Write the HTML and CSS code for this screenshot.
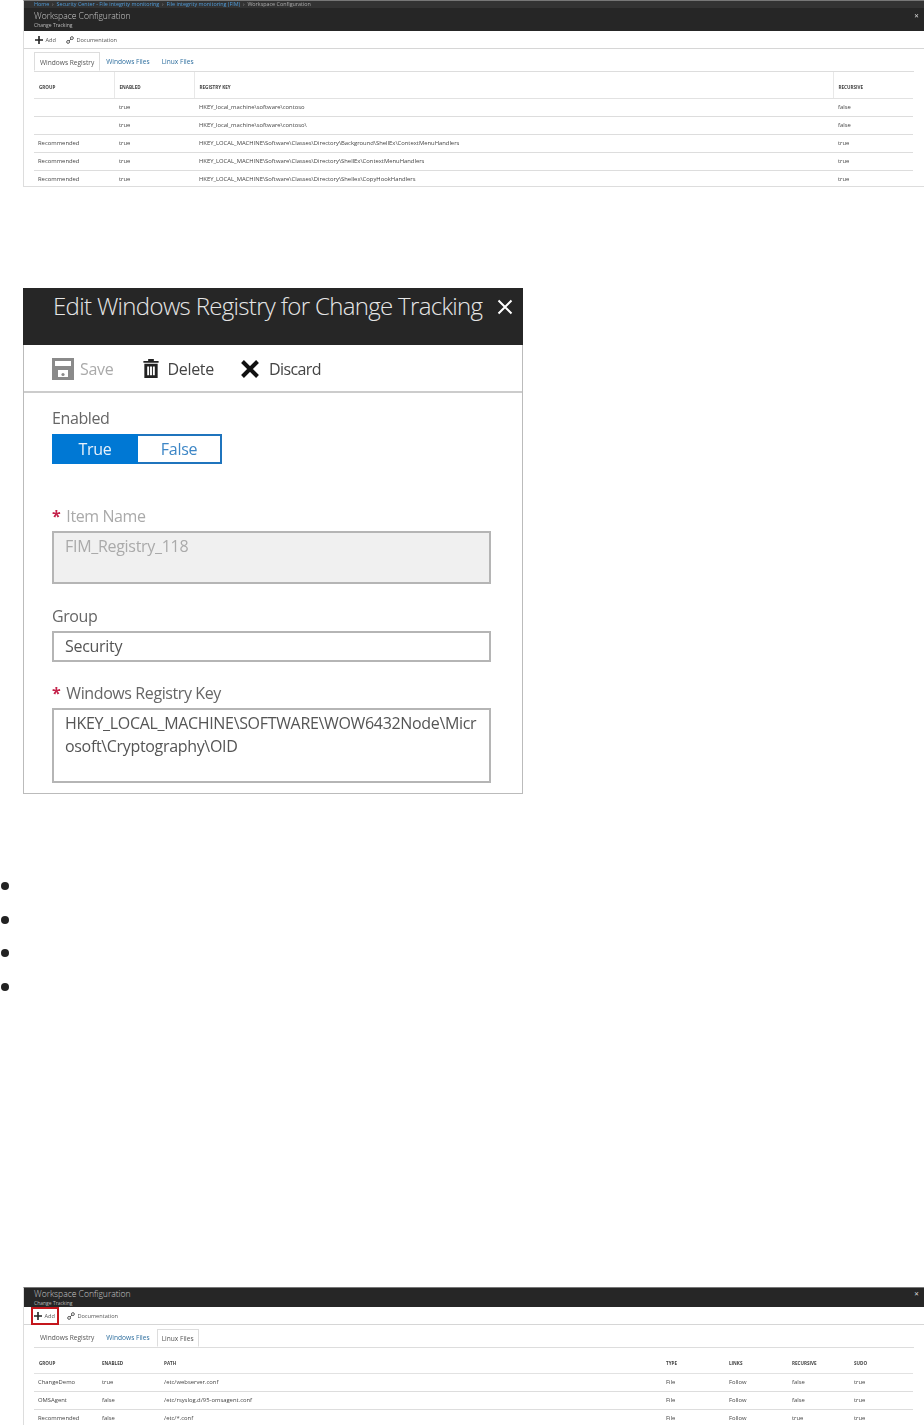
FILE: index.html
```html
<!DOCTYPE html>
<html lang="en">
<head>
<meta charset="utf-8">
<title>Workspace Configuration</title>
<link rel="stylesheet" href="styles.css">
</head>
<body>
<svg class="defs" width="0" height="0" aria-hidden="true">
  <symbol id="plus" viewBox="0 0 10 10"><path d="M4 0h2v4h4v2H6v4H4V6H0V4h4z"/></symbol>
  <symbol id="link" viewBox="0 0 10 10"><g fill="none" stroke="#333" stroke-width="1"><circle cx="2.6" cy="7.4" r="1.8"/><circle cx="7.4" cy="2.6" r="1.8"/><path d="M3.8 6.2l2.4-2.4"/></g></symbol>
</svg>

<section class="shot shot-one">
  <div class="crumbs"><span>Home</span> &nbsp;›&nbsp; <span>Security Center - File integrity monitoring</span> &nbsp;›&nbsp; <span>File integrity monitoring (FIM)</span> &nbsp;›&nbsp; <em>Workspace Configuration</em></div>
  <header class="blade-head">
    <div>
      <h2 class="blade-title">Workspace Configuration</h2>
      <p class="blade-sub">Change Tracking</p>
    </div>
    <span class="blade-close">✕</span>
  </header>
  <div class="blade-tools">
    <span class="tool tool-add"><svg class="ico"><use href="#plus"/></svg>Add</span>
    <span class="tool"><svg class="ico"><use href="#link"/></svg>Documentation</span>
  </div>
  <div class="blade-body">
    <div class="tabs">
      <span class="tab tab-on">Windows Registry</span>
      <span class="tab tab-link">Windows Files</span>
      <span class="tab tab-link">Linux Files</span>
    </div>
    <table class="grid reg-grid">
      <thead><tr><th>GROUP</th><th>ENABLED</th><th>REGISTRY KEY</th><th>RECURSIVE</th></tr></thead>
      <tbody>
        <tr><td></td><td>true</td><td>HKEY_local_machine\software\contoso</td><td>false</td></tr>
        <tr><td></td><td>true</td><td>HKEY_local_machine\software\contoso\</td><td>false</td></tr>
        <tr><td>Recommended</td><td>true</td><td>HKEY_LOCAL_MACHINE\Software\Classes\Directory\Background\ShellEx\ContextMenuHandlers</td><td>true</td></tr>
        <tr><td>Recommended</td><td>true</td><td>HKEY_LOCAL_MACHINE\Software\Classes\Directory\ShellEx\ContextMenuHandlers</td><td>true</td></tr>
        <tr><td>Recommended</td><td>true</td><td>HKEY_LOCAL_MACHINE\Software\Classes\Directory\Shellex\CopyHookHandlers</td><td>true</td></tr>
      </tbody>
    </table>
  </div>
</section>

<section class="panel">
  <header class="panel-head">
    <h1 class="panel-title">Edit Windows Registry for Change Tracking</h1>
    <svg class="panel-close" viewBox="0 0 16 16"><path d="M1.500 1.500l13 13M14.500 1.500l-13 13" stroke="#fff" stroke-width="2" fill="none"/></svg>
  </header>
  <div class="panel-tools">
    <span class="ptool ptool-off">
      <svg class="pico pico-save" viewBox="0 0 22 22"><path fill="#8a8a8a" d="M0 0h22v22H0z"/><path fill="#fff" d="M3 3h16v5H3zM6 12h10v7H6z"/><circle cx="11" cy="16.500" r="1.600" fill="#8a8a8a"/></svg>
      Save
    </span>
    <span class="ptool ptool-del">
      <svg class="pico pico-del" viewBox="0 0 16 20"><path fill="#222" fill-rule="evenodd" d="M5 0h6v2h5v2H0V2h5zM1 5h14v15H1zM4 8v9h2V8zM7 8v9h2V8zM10 8v9h2V8z"/></svg>
      Delete
    </span>
    <span class="ptool ptool-discard">
      <svg class="pico pico-x" viewBox="0 0 20 20"><path d="M2.500 2.500l15 15M17.500 2.500l-15 15" stroke="#111" stroke-width="4" fill="none"/></svg>
      Discard
    </span>
  </div>
  <div class="panel-body">
    <div class="label">Enabled</div>
    <div class="toggle"><span class="toggle-on">True</span><span class="toggle-off">False</span></div>
    <div class="label label-item"><span class="req">*</span><span class="muted">Item Name</span></div>
    <div class="field field-disabled">FIM_Registry_118</div>
    <div class="label label-group">Group</div>
    <div class="field field-text">Security</div>
    <div class="label label-key"><span class="req">*</span>Windows Registry Key</div>
    <div class="field field-area">HKEY_LOCAL_MACHINE\SOFTWARE\WOW6432Node\Micr<br>osoft\Cryptography\OID</div>
  </div>
</section>

<ul class="dots">
  <li></li><li></li><li></li><li></li>
</ul>

<section class="shot shot-three">
  <header class="blade-head">
    <div>
      <h2 class="blade-title">Workspace Configuration</h2>
      <p class="blade-sub">Change Tracking</p>
    </div>
    <span class="blade-close">✕</span>
  </header>
  <div class="blade-tools">
    <span class="tool tool-add tool-marked"><svg class="ico"><use href="#plus"/></svg>Add</span>
    <span class="tool"><svg class="ico"><use href="#link"/></svg>Documentation</span>
  </div>
  <div class="blade-body">
    <div class="tabs">
      <span class="tab tab-plain">Windows Registry</span>
      <span class="tab tab-link">Windows Files</span>
      <span class="tab tab-on">Linux Files</span>
    </div>
    <table class="grid linux-grid">
      <thead><tr><th>GROUP</th><th>ENABLED</th><th>PATH</th><th>TYPE</th><th>LINKS</th><th>RECURSIVE</th><th>SUDO</th></tr></thead>
      <tbody>
        <tr><td>ChangeDemo</td><td>true</td><td>/etc/webserver.conf</td><td>File</td><td>Follow</td><td>false</td><td>true</td></tr>
        <tr><td>OMSAgent</td><td>false</td><td>/etc/rsyslog.d/95-omsagent.conf</td><td>File</td><td>Follow</td><td>false</td><td>true</td></tr>
        <tr><td>Recommended</td><td>false</td><td>/etc/*.conf</td><td>File</td><td>Follow</td><td>true</td><td>true</td></tr>
      </tbody>
    </table>
  </div>
</section>
</body>
</html>
```

FILE: styles.css
```css
* { box-sizing: border-box; }
html, body { margin: 0; padding: 0; background: #fff; }
body {
  width: 924px;
  height: 1425px;
  overflow: hidden;
  font-family: "Open Sans", "Liberation Sans", sans-serif;
  color: #333;
}
.defs { position: absolute; }

/* small blade screenshots */
.shot {
  margin-left: 23px;
  border-left: 1px solid #ddd;
  filter: blur(0.45px);
  overflow: hidden;
}
.shot-one { height: 187px; border-bottom: 1px solid #ddd; border-top: 1px solid #777; }
.shot-three { height: 138px; border-top: 1px solid #777; }

.crumbs {
  height: 7px;
  background: #333;
  padding-left: 10px;
  font-size: 5.4px;
  line-height: 6px;
  color: #9a9a9a;
  white-space: nowrap;
}
.crumbs span { color: #4f9bd9; }
.crumbs em { font-style: normal; color: #aaa; }

.blade-head {
  display: flex;
  justify-content: space-between;
  background: #262626;
  padding: 0 5px 0 10px;
}
.shot-one .blade-head { height: 23px; padding-top: 2px; }
.shot-three .blade-head { height: 19px; }
.blade-title { margin: 0; font-size: 8.6px; line-height: 12px; font-weight: 300; letter-spacing: -0.03px; color: #c8c8c8; }
.blade-sub { margin: 0; font-size: 5px; line-height: 6px; color: #bbb; }
.blade-close { font-size: 6px; line-height: 12px; color: #ddd; }

.blade-tools {
  display: flex;
  align-items: center;
  gap: 10px;
  height: 18px;
  padding-left: 11px;
  border-bottom: 1px solid #d6d6d6;
}
.tool { display: flex; align-items: center; gap: 2.500px; font-size: 5.6px; color: #555; }
.ico { width: 8px; height: 8px; flex: none; fill: #222; }
.tool-marked { outline: 2px solid #c4161c; padding: 0 2px 0 1px; height: 14px; margin-left: -2px; }

.blade-body { padding: 4px 10px 0; }
.tabs {
  display: flex;
  align-items: flex-end;
  height: 19px;
  border-bottom: 1px solid #ddd;
  font-size: 6.600px;
  color: #555;
}
.tab { padding: 0 6px; height: 19px; line-height: 19px; white-space: nowrap; }
.tab-on { padding: 0 5px; border: 1px solid #ddd; border-bottom: 1px solid #fff; background: #fff; }
.tab-link { color: #2f6f9f; }

.grid {
  width: 879px;
  table-layout: fixed;
  border-collapse: collapse;
  font-size: 5.860px;
  color: #444;
}
.grid th {
  height: 26px;
  text-align: left;
  font-weight: 700;
  font-size: 4.600px;
  padding: 4px 5px 0;
  border-bottom: 1px solid #e2e2e2;
}
.grid td {
  height: 18px;
  padding: 0 5px;
  border-bottom: 1px solid #ddd;
  white-space: nowrap;
  overflow: hidden;
}
.grid td:first-child { padding-left: 4px; }
.reg-grid th + th { border-left: 1px solid #e8e8e8; }
.reg-grid th:nth-child(1) { width: 80px; }
.reg-grid th:nth-child(2) { width: 80px; }
.reg-grid th:nth-child(4) { width: 80px; }

.linux-grid th, .linux-grid td { padding-left: 4px; }
.linux-grid th:nth-child(1) { width: 64px; padding-left: 5px; }
.linux-grid th:nth-child(2) { width: 62px; }
.linux-grid th:nth-child(3) { width: 502px; }
.linux-grid th:nth-child(4) { width: 63px; }
.linux-grid th:nth-child(5) { width: 63px; }
.linux-grid th:nth-child(6) { width: 62px; }
.linux-grid th { height: 25px; padding-top: 5px; }
.shot-three .blade-body { padding-top: 5px; }
.shot-three .tabs { height: 18px; }
.shot-three .tab { height: 18px; line-height: 18px; }
.shot-three .tab-on { padding: 0 4px; margin-left: 1px; }

/* edit panel */
.panel {
  width: 500px;
  height: 506px;
  margin: 101px 0 0 23px;
  border: 1px solid #bbb;
  border-top: 0;
  filter: blur(0.4px);
}
.panel-head {
  display: flex;
  justify-content: space-between;
  height: 57px;
  margin: 0 -1px;
  padding: 2px 10px 0 30px;
  background: #262626;
}
.panel-title {
  margin: 0;
  font-size: 24px;
  line-height: 32px;
  font-weight: 300;
  letter-spacing: -0.67px;
  color: #e6e6e6;
  white-space: nowrap;
}
.panel-close { width: 16px; height: 16px; margin: 9px 0 0; flex: none; }
.panel-tools {
  display: flex;
  align-items: center;
  height: 48px;
  padding: 1px 0 0 28px;
  gap: 26px;
  border-bottom: 2px solid #ccc;
  font-size: 16px;
  letter-spacing: -0.3px;
  color: #444;
}
.ptool { display: flex; align-items: center; gap: 8px; }
.ptool-off { color: #aaa; gap: 6px; }
.ptool-del { margin-left: 4px; }
.ptool-discard { gap: 9px; letter-spacing: -0.6px; }
.pico { flex: none; }
.pico-save { width: 22px; height: 22px; }
.pico-del { width: 16px; height: 19px; }
.pico-x { width: 20px; height: 20px; }
.panel-body { padding: 14px 31px 0 28px; }
.label { font-size: 16px; line-height: 22px; letter-spacing: -0.4px; color: #666; }
.toggle {
  display: flex;
  width: 170px;
  height: 30px;
  margin-top: 5px;
  border: 2px solid #1f74bd;
  font-size: 16px;
  line-height: 26px;
  text-align: center;
  letter-spacing: -0.3px;
}
.toggle-on { width: 86px; margin: -2px 0 -2px -2px; padding-top: 2px; background: #0078d4; color: #e8f2fb; }
.toggle-off { flex: 1; color: #3d86c6; }
.req { color: #c4234b; margin-right: 6px; font-weight: 700; }
.muted { color: #aaa; }
.label-item { margin-top: 41px; }
.field {
  width: 439px;
  border: 2px solid #b5b5b5;
  padding: 0 11px;
  font-size: 16px;
  letter-spacing: -0.3px;
  color: #555;
}
.field-disabled { height: 53px; margin-top: 4px; background: #f0f0f0; color: #aaa; line-height: 26px; }
.label-group { margin-top: 21px; }
.field-text { height: 31px; margin-top: 4px; line-height: 26px; }
.label-key { margin-top: 20px; }
.field-area { height: 75px; margin-top: 4px; line-height: 23px; padding-top: 2px; white-space: nowrap; letter-spacing: -0.33px; }

/* bullets */
.dots {
  list-style: none;
  margin: 88px 0 0;
  padding: 0 0 0 1px;
  height: 405px;
  display: flex;
  flex-direction: column;
  gap: 25.500px;
}
.dots li { width: 8px; height: 8px; border-radius: 50%; background: #222; }
```
